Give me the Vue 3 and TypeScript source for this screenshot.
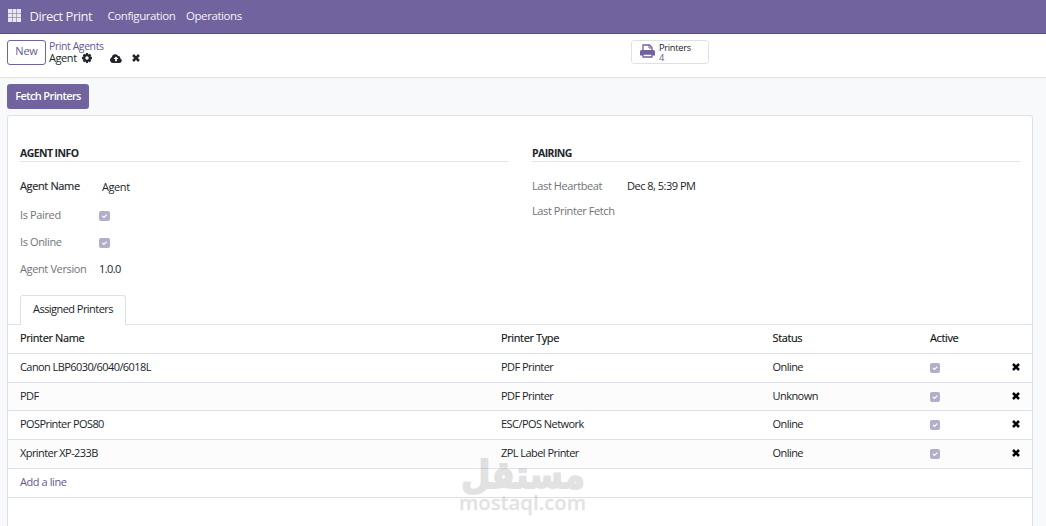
<script setup lang="ts">
interface Printer {
  name: string
  type: string
  status: string
}

const printers: Printer[] = [
  { name: 'Canon LBP6030/6040/6018L', type: 'PDF Printer', status: 'Online' },
  { name: 'PDF', type: 'PDF Printer', status: 'Unknown' },
  { name: 'POSPrinter POS80', type: 'ESC/POS Network', status: 'Online' },
  { name: 'Xprinter XP-233B', type: 'ZPL Label Printer', status: 'Online' },
]
</script>

<template>
  <div class="app">
    <header class="navbar">
      <svg class="apps" width="13" height="13" viewBox="0 0 13 13">
        <g v-for="r in 3" :key="r">
          <rect v-for="c in 3" :key="c" :x="(c - 1) * 4.5" :y="(r - 1) * 4.5" width="4" height="4" fill="#e9e7f1" />
        </g>
      </svg>
      <span class="brand">Direct Print</span>
      <span class="menu config">Configuration</span>
      <span class="menu">Operations</span>
    </header>

    <section class="control">
      <button class="new">New</button>
      <div class="crumbs">
        <span class="parent">Print Agents</span>
        <div class="current">
          <span class="here">Agent</span>
          <svg class="gear" width="10" height="10" viewBox="0 0 20 20">
            <g fill="#212529">
              <rect v-for="a in [0, 45, 90, 135]" :key="a" x="7.7" y="0" width="4.6" height="20" rx="1" :transform="`rotate(${a} 10 10)`" />
              <circle cx="10" cy="10" r="7.6" />
            </g>
            <circle cx="10" cy="10" r="3.5" fill="#fff" />
          </svg>
          <svg class="cloud" width="12" height="9" viewBox="0 0 24 18">
            <path d="M6 18a6 6 0 0 1-2.5-11.4A7 7 0 0 1 16.6 4.2a4 4 0 0 1 4 4.6A4.8 4.8 0 0 1 19 18z" fill="#212529" />
            <path d="M12 4.8 17 10h-3.2v4.6h-3.6V10H7z" fill="#fff" />
          </svg>
          <svg class="cross" width="8" height="8" viewBox="0 0 16 16"><path d="M2 2l12 12M14 2l-12 12" stroke="#212529" stroke-width="5" /></svg>
        </div>
      </div>
      <div class="stat">
        <svg width="15" height="14" viewBox="0 0 30 28">
          <path d="M6 13V2h13l5 5v6" fill="#fff" stroke="#71639e" stroke-width="2.6" />
          <path d="M18 2v6h6" fill="none" stroke="#71639e" stroke-width="2" />
          <path d="M3 12h24a3 3 0 0 1 3 3v8h-6H0v-8a3 3 0 0 1 3-3z" fill="#71639e" />
          <path d="M6 20h18v6H6z" fill="#fff" stroke="#71639e" stroke-width="2.6" />
        </svg>
        <div class="stat-text">
          <span>Printers</span>
          <span class="count">4</span>
        </div>
      </div>
    </section>

    <main class="content">
      <button class="fetch">Fetch Printers</button>
      <div class="sheet">
        <div class="groups">
          <section class="group">
            <h2>AGENT INFO</h2>
            <div class="field name-field"><label class="required">Agent Name</label><span>Agent</span></div>
            <div class="field tall"><label>Is Paired</label><i class="check"><svg viewBox="0 0 11 11"><path d="M3.2 5.4l1.7 1.6L8 4" /></svg></i></div>
            <div class="field tall"><label>Is Online</label><i class="check"><svg viewBox="0 0 11 11"><path d="M3.2 5.4l1.7 1.6L8 4" /></svg></i></div>
            <div class="field tall"><label class="version">Agent Version</label><span class="number">1.0.0</span></div>
          </section>
          <section class="group pairing">
            <h2>PAIRING</h2>
            <div class="field"><label class="beat">Last Heartbeat</label><span class="date">Dec 8, 5:39 PM</span></div>
            <div class="field"><label class="beat">Last Printer Fetch</label></div>
          </section>
        </div>
        <nav class="tabs"><span class="tab">Assigned Printers</span></nav>
        <div class="table">
          <div class="row head"><span>Printer Name</span><span>Printer Type</span><span>Status</span><span>Active</span><span /></div>
          <div v-for="(p, i) in printers" :key="p.name" class="row" :class="{ striped: i % 2 === 1, short: i === 1 }">
            <span class="pname">{{ p.name }}</span>
            <span>{{ p.type }}</span>
            <span>{{ p.status }}</span>
            <span><i class="check"><svg viewBox="0 0 11 11"><path d="M3.2 5.4l1.7 1.6L8 4" /></svg></i></span>
            <svg class="remove" width="8" height="8" viewBox="0 0 16 16"><path d="M2 2l12 12M14 2l-12 12" stroke="#000" stroke-width="5" /></svg>
          </div>
          <div class="row add"><span>Add a line</span></div>
        </div>
      </div>
    </main>

    <svg class="watermark" width="140" height="75" viewBox="0 0 140 75">
      <text class="arabic" x="8" y="37" textLength="124" lengthAdjust="spacingAndGlyphs" direction="rtl" text-anchor="end">مستقل</text>
      <text class="latin" x="6" y="58.5" textLength="127" lengthAdjust="spacingAndGlyphs">mostaql.com</text>
    </svg>
  </div>
</template>

<style>
body {
  overflow: hidden;
}
</style>

<style scoped>
* {
  box-sizing: border-box;
}
.app {
  position: relative;
  height: 526px;
  overflow: hidden;
  display: flex;
  flex-direction: column;
  background: #f8f9fa;
  color: #212529;
  font: 11px/16px "Open Sans", "Noto Sans", sans-serif;
  letter-spacing: -0.42px;
  white-space: nowrap;
}
.navbar {
  flex: none;
  height: 34px;
  padding: 0 0 2px 8px;
  display: flex;
  align-items: center;
  background: #71639e;
  border-bottom: 1px solid #5a4f7f;
  color: #f4f2f8;
}
.brand {
  width: 78px;
  margin-left: 8.5px;
  font-size: 13px;
  letter-spacing: -0.5px;
}
.menu {
  font-size: 11.5px;
  letter-spacing: -0.43px;
}
.config {
  width: 78.5px;
}
.control {
  flex: none;
  height: 44px;
  display: flex;
  align-items: flex-start;
  padding: 6px 0 0 7px;
  background: #fff;
  border-bottom: 1px solid #dee2e6;
}
button {
  font: inherit;
  letter-spacing: inherit;
  padding: 0;
}
.new {
  width: 39px;
  height: 25px;
  padding-bottom: 3px;
  border: 1px solid #71639e;
  border-radius: 3px;
  background: #fff;
  color: #66598f;
  letter-spacing: -0.2px;
}
.crumbs {
  width: 585px;
  padding-left: 3px;
  line-height: 12px;
}
.parent {
  display: block;
  color: #66598f;
  font-size: 10.5px;
}
.current {
  display: flex;
  align-items: center;
}
.here {
  width: 33px;
}
.cloud {
  margin-left: 18px;
}
.cross {
  margin-left: 10px;
}
.stat {
  width: 78px;
  height: 24px;
  display: flex;
  align-items: center;
  padding-left: 8px;
  border: 1px solid #dee2e6;
  border-radius: 3px;
}
.stat > svg {
  margin-top: -2px;
}
.stat-text {
  display: flex;
  flex-direction: column;
  margin-left: 4px;
  padding-top: 1px;
  font-size: 9.3px;
  line-height: 10px;
  letter-spacing: -0.3px;
}
.count {
  color: #66598f;
}
.content {
  flex: 1;
  min-height: 0;
  display: flex;
  flex-direction: column;
  padding: 6px 13px 0 7px;
}
.fetch {
  flex: none;
  width: 82px;
  height: 25px;
  padding-bottom: 1px;
  border: 0;
  border-radius: 3px;
  background: #71639e;
  color: #fff;
  font-weight: 600;
  letter-spacing: -0.62px;
}
.sheet {
  flex: 1;
  margin-top: 6px;
  border: 1px solid #dee2e6;
  border-bottom: 0;
  border-radius: 3px 3px 0 0;
  background: #fff;
}
.groups {
  height: 179px;
  padding: 29px 12px 0;
  display: grid;
  grid-template-columns: 488px 488px;
  gap: 24px;
}
h2 {
  margin: 0 0 11px;
  height: 17px;
  border-bottom: 1px solid #e3e5e8;
  font-size: 10.5px;
  line-height: 16px;
  font-weight: 700;
  letter-spacing: -0.58px;
}
.field {
  height: 25px;
  display: flex;
  align-items: center;
}
.tall {
  height: 27px;
}
.name-field {
  height: 28px;
  padding-bottom: 3px;
}
.name-field span {
  padding: 2px 0 0 3px;
}
label {
  width: 79px;
  color: #707478;
  letter-spacing: -0.37px;
}
.required {
  color: #212529;
  -webkit-text-stroke: 0.15px #212529;
}
.beat {
  width: 95px;
  letter-spacing: -0.4px;
}
.date {
  letter-spacing: -0.5px;
}
.check {
  display: block;
  width: 11px;
  height: 10px;
  margin-top: 2px;
  border-radius: 2px;
  background: #b4aecb;
}
.check svg {
  display: block;
  width: 11px;
  height: 10px;
  fill: none;
  stroke: #fff;
  stroke-width: 1.4;
}
.number {
  letter-spacing: -0.6px;
}
.tabs {
  height: 30px;
  padding-left: 12px;
  border-bottom: 1px solid #dee2e6;
}
.tab {
  display: block;
  width: 106px;
  height: 30px;
  border: 1px solid #dee2e6;
  border-bottom: 0;
  border-radius: 3px 3px 0 0;
  background: #fff;
  line-height: 26px;
  text-align: center;
  letter-spacing: -0.55px;
}
.row {
  height: 29px;
  padding: 0 12px 2px;
  display: grid;
  grid-template-columns: 481px 271.5px 157.5px 82px 8px;
  align-items: center;
  border-bottom: 1px solid #dee2e6;
  letter-spacing: -0.55px;
}
.pname {
  letter-spacing: -0.58px;
}
.head {
  color: #111;
  letter-spacing: -0.38px;
  -webkit-text-stroke: 0.15px #111;
}
.striped {
  background: #fcfcfc;
}
.short {
  height: 28px;
  padding-bottom: 1px;
}
.row .check {
  width: 10px;
  margin-top: 2px;
}
.row .check svg {
  width: 10px;
}
.add {
  color: #66598f;
  letter-spacing: -0.42px;
}
.watermark {
  position: absolute;
  left: 453px;
  top: 451px;
  fill: #000;
  stroke: #000;
  opacity: 0.11;
  letter-spacing: 0;
}
.arabic {
  font: 700 38px "DejaVu Sans", sans-serif;
  stroke-width: 1.8px;
  stroke-linejoin: round;
}
.latin {
  font: 600 19px "Open Sans", sans-serif;
  stroke-width: 0.3px;
}
</style>
